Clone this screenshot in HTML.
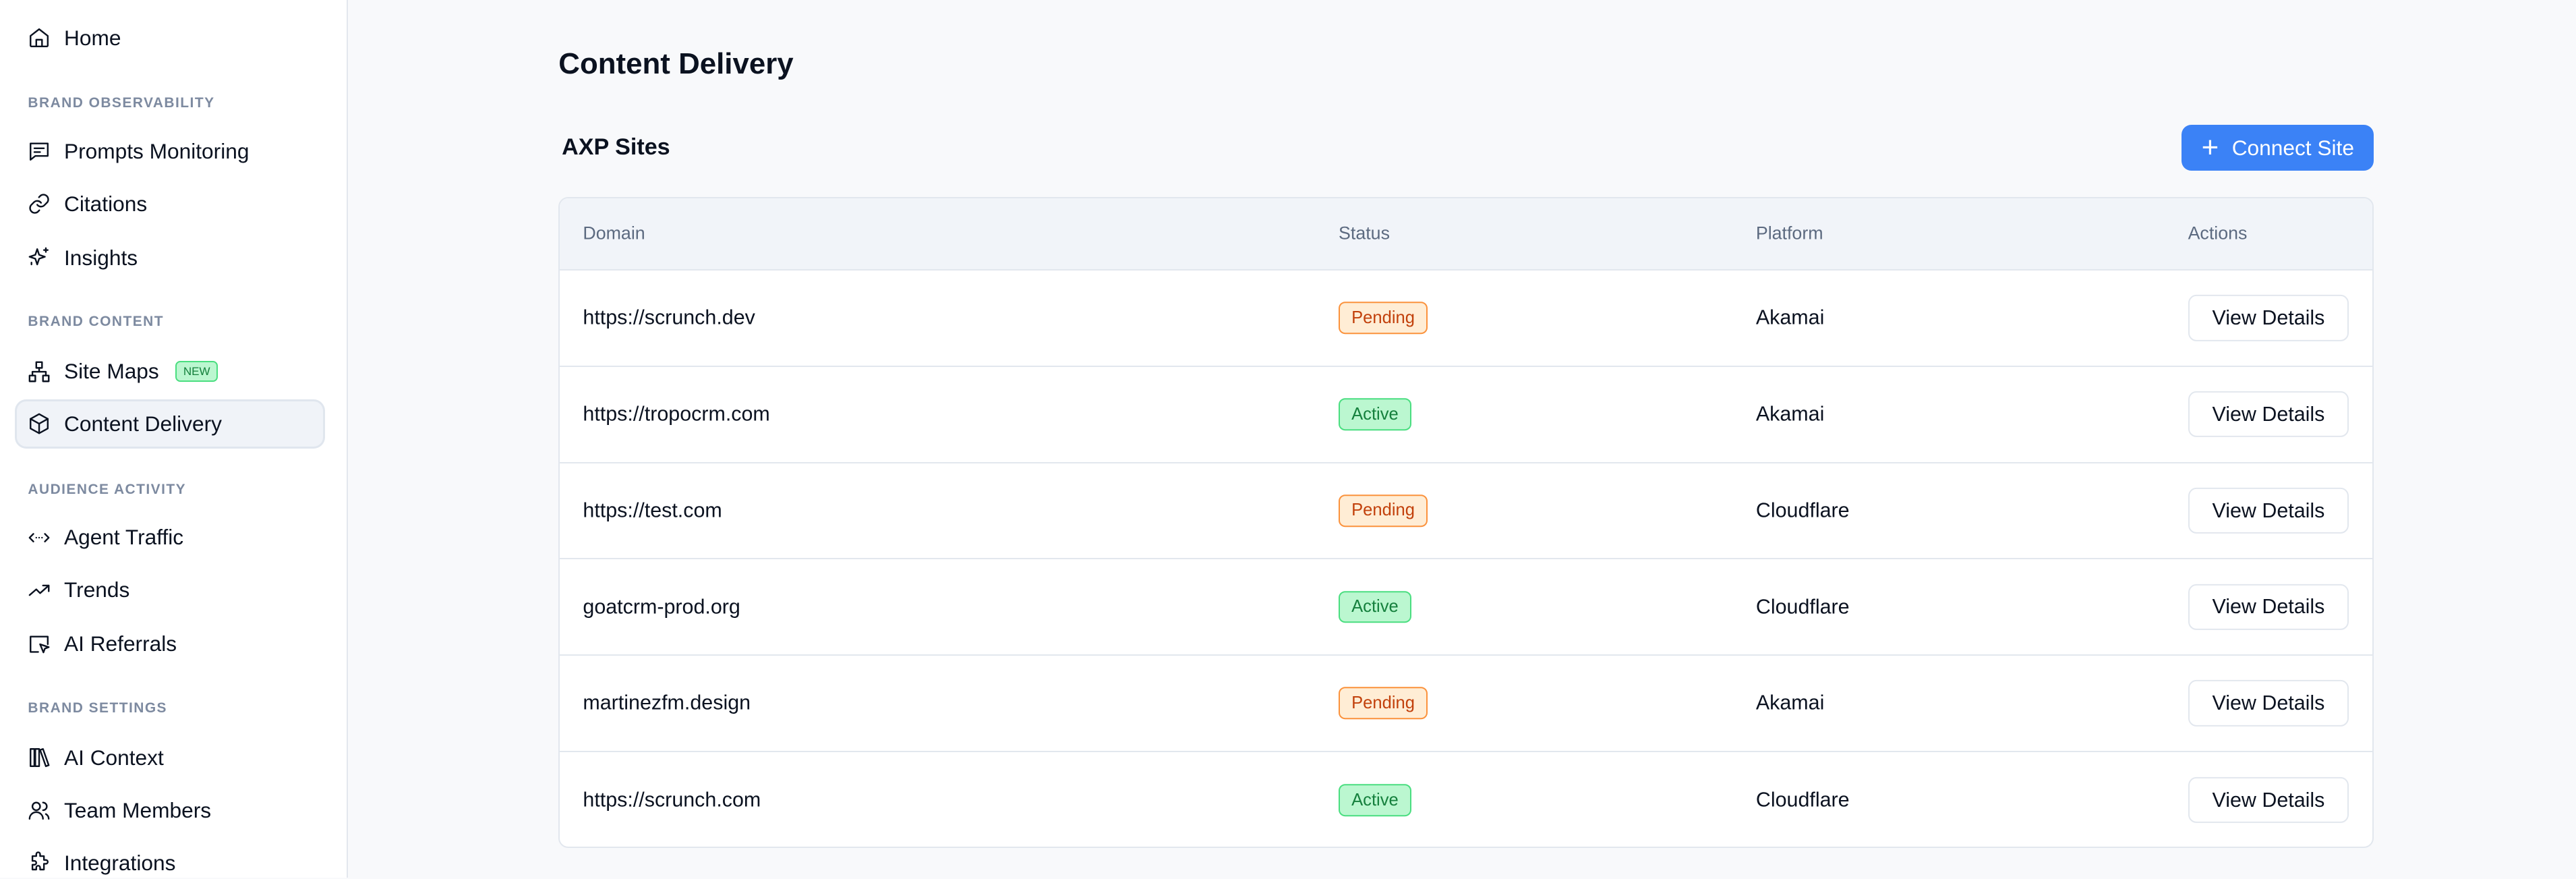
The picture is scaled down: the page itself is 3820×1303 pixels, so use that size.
<!DOCTYPE html>
<html><head><meta charset="utf-8"><style>
html,body{margin:0;padding:0;}
body{width:3820px;height:1300px;overflow:hidden;background:#f8f9fb;font-family:"Liberation Sans",Arial,sans-serif;color:#0b1220;}
#root{zoom:2.4362;width:1568px;height:534px;position:relative;}
.side{position:absolute;left:0;top:0;width:212px;height:534px;background:#fff;border-right:1px solid #e3e7ee;box-sizing:border-box;}
.it{position:absolute;left:17px;height:20px;display:flex;align-items:center;font-size:13px;color:#0b1220;}
.it svg{width:14px;height:14px;margin-right:8px;fill:none;stroke:#0b1220;stroke-width:1.7;stroke-linecap:round;stroke-linejoin:round;}
.sec{position:absolute;left:17px;font-size:8.6px;font-weight:bold;letter-spacing:.6px;color:#7d8aa0;}
.act{position:absolute;left:9px;top:243px;width:189px;height:30px;background:#f0f3f8;border:1.5px solid #e0e6ee;border-radius:7px;box-sizing:border-box;}
.new{display:inline-block;margin-left:10px;font-size:7px;color:#15803d;background:#bbf7d0;border:1px solid #4ade80;border-radius:3px;padding:1px 4px;line-height:9px;}
h1{position:absolute;left:340px;top:28px;margin:0;font-size:18px;font-weight:bold;line-height:22px;}
h2{position:absolute;left:342px;top:81px;margin:0;font-size:14px;font-weight:bold;line-height:18px;}
.btn{position:absolute;left:1328px;top:76px;width:117px;height:28px;background:#3b82f6;border-radius:6px;color:#fff;font-size:13px;display:flex;align-items:center;justify-content:center;}
.tbl{position:absolute;left:340px;top:120px;width:1105px;height:396px;background:#fff;border:1px solid #e2e7ee;border-radius:6px;box-sizing:border-box;overflow:hidden;}
.hd{height:43px;background:#f1f4f9;border-bottom:1px solid #e2e7ee;position:relative;font-size:11px;color:#5c6a80;}
.row{height:58.6px;border-bottom:1px solid #e2e7ee;position:relative;font-size:12.5px;box-sizing:border-box;}
.row:last-child{border-bottom:none;}
.c{position:absolute;top:50%;transform:translateY(-50%);}
.hd .c{top:21px;}
.b{font-size:10.5px;padding:3px 7px;border-radius:4px;border:1px solid;}
.p{background:#ffedd5;border-color:#fb923c;color:#c2410c;}
.a{background:#bbf7d0;border-color:#4ade80;color:#15803d;}
.vd{position:absolute;left:991px;top:50%;transform:translateY(-50%);width:98px;height:28px;border:1px solid #e2e7ee;border-radius:5px;box-sizing:border-box;display:flex;align-items:center;justify-content:center;font-size:12.5px;background:#fff;}
</style></head><body><div id="root">
<div class="side">
<div class="act"></div>
<div class="it" style="top:13px"><svg viewBox="0 0 24 24"><path d="M3 10l9-7 9 7v10a1 1 0 0 1-1 1H4a1 1 0 0 1-1-1z"/><path d="M9 21v-7h6v7"/></svg>Home</div>
<div class="sec" style="top:58px">BRAND OBSERVABILITY</div>
<div class="it" style="top:82px"><svg viewBox="0 0 24 24"><path d="M3 4h18v13H8l-5 4z"/><path d="M7 9h10M7 13h6"/></svg>Prompts Monitoring</div>
<div class="it" style="top:114px"><svg viewBox="0 0 24 24"><path d="M10 13a5 5 0 0 0 7.5.5l3-3a5 5 0 0 0-7-7l-1.7 1.7"/><path d="M14 11a5 5 0 0 0-7.5-.5l-3 3a5 5 0 0 0 7 7l1.7-1.7"/></svg>Citations</div>
<div class="it" style="top:147px"><svg viewBox="0 0 24 24"><path d="M10 3l2 6 6 2-6 2-2 6-2-6-6-2 6-2z"/><path d="M19 2v4M17 4h4M4 17v2"/></svg>Insights</div>
<div class="sec" style="top:191px">BRAND CONTENT</div>
<div class="it" style="top:216px"><svg viewBox="0 0 24 24"><rect x="9" y="2" width="6" height="6"/><rect x="2" y="16" width="6" height="6"/><rect x="16" y="16" width="6" height="6"/><path d="M5 16v-4h14v4M12 8v4"/></svg>Site Maps<span class="new">NEW</span></div>
<div class="it" style="top:248px"><svg viewBox="0 0 24 24"><path d="M12 2l9 5v10l-9 5-9-5V7z"/><path d="M3 7l9 5 9-5M12 12v10"/></svg>Content Delivery</div>
<div class="sec" style="top:293px">AUDIENCE ACTIVITY</div>
<div class="it" style="top:317px"><svg viewBox="0 0 24 24"><path d="M6 8l-4 4 4 4M18 8l4 4-4 4M9 12h.01M12 12h.01M15 12h.01"/></svg>Agent Traffic</div>
<div class="it" style="top:349px"><svg viewBox="0 0 24 24"><path d="M2 17l7-6 4 4 9-8M16 7h6v6"/></svg>Trends</div>
<div class="it" style="top:382px"><svg viewBox="0 0 24 24"><path d="M21 12V4H3v16h8"/><path d="M13 12l9 3-4 1.5-1.5 4z"/></svg>AI Referrals</div>
<div class="sec" style="top:426px">BRAND SETTINGS</div>
<div class="it" style="top:451px"><svg viewBox="0 0 24 24"><rect x="3" y="3" width="4" height="18"/><rect x="8" y="3" width="4" height="18"/><path d="M13 4l3-1 6 17-3 1z"/></svg>AI Context</div>
<div class="it" style="top:483px"><svg viewBox="0 0 24 24"><circle cx="9" cy="8" r="4"/><path d="M2 21a7 7 0 0 1 14 0M16 4a4 4 0 0 1 0 8M22 21a6 6 0 0 0-3-5"/></svg>Team Members</div>
<div class="it" style="top:515px"><svg viewBox="0 0 24 24"><path d="M9 3a2 2 0 0 1 4 0v2h4v4h2a2 2 0 0 1 0 4h-2v6h-4v-2a2 2 0 0 0-4 0v2H5v-5h2a2 2 0 0 0 0-4H5V5h4z"/></svg>Integrations</div>
</div>
<h1>Content Delivery</h1>
<h2>AXP Sites</h2>
<div class="btn"><span style="font-size:18px;font-weight:300;margin-right:8px;line-height:1">+</span>Connect Site</div>
<div class="tbl">
<div class="hd"><span class="c" style="left:14px">Domain</span><span class="c" style="left:474px">Status</span><span class="c" style="left:728px">Platform</span><span class="c" style="left:991px">Actions</span></div>
<div class="row"><span class="c" style="left:14px">https://scrunch.dev</span><span class="c b p" style="left:474px">Pending</span><span class="c" style="left:728px">Akamai</span><span class="vd">View Details</span></div>
<div class="row"><span class="c" style="left:14px">https://tropocrm.com</span><span class="c b a" style="left:474px">Active</span><span class="c" style="left:728px">Akamai</span><span class="vd">View Details</span></div>
<div class="row"><span class="c" style="left:14px">https://test.com</span><span class="c b p" style="left:474px">Pending</span><span class="c" style="left:728px">Cloudflare</span><span class="vd">View Details</span></div>
<div class="row"><span class="c" style="left:14px">goatcrm-prod.org</span><span class="c b a" style="left:474px">Active</span><span class="c" style="left:728px">Cloudflare</span><span class="vd">View Details</span></div>
<div class="row"><span class="c" style="left:14px">martinezfm.design</span><span class="c b p" style="left:474px">Pending</span><span class="c" style="left:728px">Akamai</span><span class="vd">View Details</span></div>
<div class="row"><span class="c" style="left:14px">https://scrunch.com</span><span class="c b a" style="left:474px">Active</span><span class="c" style="left:728px">Cloudflare</span><span class="vd">View Details</span></div>
</div>
</div></body></html>
